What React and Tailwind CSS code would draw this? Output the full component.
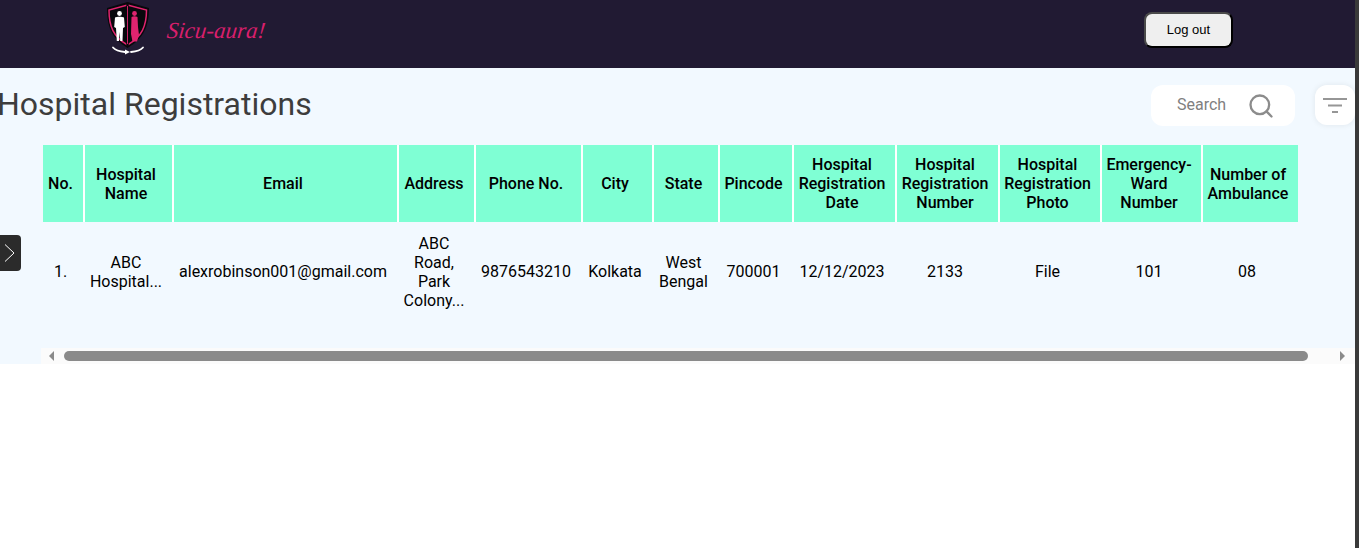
import React from 'react';
import { Search } from 'lucide-react';

const columns = [
  { label: 'No.', width: 'w-[42px]', value: '1.' },
  { label: 'Hospital Name', width: 'w-[89px]', value: 'ABC Hospital...' },
  { label: 'Email', width: 'w-[225px]', value: 'alexrobinson001@gmail.com' },
  { label: 'Address', width: 'w-[77px]', value: 'ABC Road, Park Colony...' },
  { label: 'Phone No.', width: 'w-[107px]', value: '9876543210' },
  { label: 'City', width: 'w-[71px]', value: 'Kolkata' },
  { label: 'State', width: 'w-[66px]', value: 'West Bengal' },
  { label: 'Pincode', width: 'w-[74px]', value: '700001' },
  { label: 'Hospital Registration Date', width: 'w-[103px]', value: '12/12/2023' },
  { label: 'Hospital Registration Number', width: 'w-[103px]', value: '2133' },
  { label: 'Hospital Registration Photo', width: 'w-[102px]', value: 'File' },
  { label: 'Emergency-Ward Number', width: 'w-[101px]', value: '101' },
  { label: 'Number of Ambulance', width: 'w-[95px]', value: '08' },
];

function Logo() {
  return (
    <div className="flex items-center gap-[17px] mb-[12px]">
      <svg width="44" height="56" viewBox="0 0 44 56" className="shrink-0">
        <path d="M21.5 2 L43 8 C43 26 38 38 21.5 48 C5 38 1 26 1 8 Z" fill="#08080c" />
        <path d="M21.5 5 L40.5 10 C40.5 26 36 36.5 21.5 45 C7 36.5 3 26 3 10 Z" fill="#08080c" stroke="#e0246f" strokeWidth="1.5" />
        <path d="M21.5 4 V46" stroke="#08080c" strokeWidth="2.4" />
        <path d="M21.5 6 V44" stroke="#e0246f" strokeWidth="0.9" />
        <circle cx="13.5" cy="13.5" r="2.4" fill="#fff" />
        <path d="M9 17.5 C10.5 16.5 16.5 16.5 18 17.5 L18.8 27 L17 28 L16.5 41 H14.3 L13.6 32 L13 41 H10.8 L10 28 L8.2 27 Z" fill="#fff" />
        <circle cx="28.5" cy="13.5" r="2.4" fill="#e0246f" />
        <path d="M25.5 17 C27 16 30 16 31.5 17 L32 27 L33 35 L31 41.5 H26.5 L25 34 Z" fill="#e0246f" />
        <path d="M7 47.5 C10 51 14 51.5 19 52 M25 52 C30 51.5 34 51 37 47.5" stroke="#fff" strokeWidth="1.8" fill="none" strokeLinecap="round" />
        <path d="M19 49.5 L24 52 L19 54.5 Z" fill="#fff" />
      </svg>
      <span className="mt-[4px] font-['Liberation_Serif',serif] italic text-[23px] leading-none text-[#d81f6c] -skew-x-6">Sicu-aura!</span>
    </div>
  );
}

function FilterIcon() {
  return (
    <svg width="24" height="15" viewBox="0 0 24 15" className="text-[#969696]" stroke="currentColor" strokeWidth="2">
      <path d="M0 1 H24 M5 7.5 H19 M9 14 H15" />
    </svg>
  );
}

export default function App() {
  return (
    <div className="flex min-h-[548px] bg-white font-['Roboto',sans-serif] overflow-hidden">
      <div className="flex-1 min-w-0">
        <header className="h-[68px] bg-[#211a33] flex items-center justify-between pl-[106px] pr-[122px]">
          <Logo />
          <button className="w-[89px] h-[36px] mb-[8px] rounded-lg bg-[#efefef] text-[13px] text-black border-2 border-t-[#4a4a4a] border-l-[#4a4a4a] border-r-black border-b-black font-['Liberation_Sans',sans-serif]">
            Log out
          </button>
        </header>

        <main className="relative h-[296px] bg-[#f2f9ff]">
          <div className="flex items-start justify-between h-[77px]">
            <h1 className="text-[32px] leading-none text-[#3d3d3d] -ml-[3px] mt-[20px]">Hospital Registrations</h1>
            <div className="flex items-start gap-5 mt-[17px]">
              <div className="w-[144px] h-[41px] bg-white rounded-xl flex items-center pl-[26px] gap-[21px]">
                <span className="text-[16px] text-[#808080] mb-[2px]">Search</span>
                <Search size={28} strokeWidth={2} className="text-[#8c8c8c] shrink-0" />
              </div>
              <div className="w-[40px] h-[40px] bg-white rounded-xl shadow-[0_0_6px_rgba(0,0,0,0.08)] flex items-center justify-center">
                <FilterIcon />
              </div>
            </div>
          </div>

          <div className="pl-[43px]">
            <table className="table-fixed border-separate border-spacing-0 w-[1255px] text-center text-[16px] leading-[19px] text-black">
              <thead>
                <tr>
                  {columns.map((c) => (
                    <th key={c.label} className={`${c.width} h-[77px] pl-[2px] pr-[7px] font-medium bg-[#7fffd4] border-r-2 border-white last:border-r-0`}>
                      {c.label}
                    </th>
                  ))}
                </tr>
              </thead>
              <tbody>
                <tr>
                  {columns.map((c) => (
                    <td key={c.label} className="h-[99px] pl-[2px] pr-[9px] font-normal">{c.value}</td>
                  ))}
                </tr>
              </tbody>
            </table>
          </div>

          <div className="absolute left-0 top-[167px] w-[21px] h-[36px] bg-[#2b2b2b] rounded-r flex items-center pl-[4px]">
            <svg width="11" height="18" viewBox="0 0 11 18" fill="none" stroke="#fff" strokeWidth="1">
              <path d="M1 0.5 L10 9 L1 17.5" />
            </svg>
          </div>

          <div className="absolute left-[41px] right-0 bottom-0 h-[16px] bg-[#fbfbfb] flex items-center">
            <div className="w-0 h-0 ml-[8px] border-y-[5px] border-y-transparent border-r-[5px] border-r-[#8a8a8a]" />
            <div className="ml-[10px] w-[1244px] h-[10px] rounded-full bg-[#8a8a8a]" />
            <div className="w-0 h-0 ml-[32px] border-y-[5px] border-y-transparent border-l-[5px] border-l-[#8a8a8a]" />
          </div>
        </main>
      </div>
      <div className="w-[4px] bg-[#3a3a3a]" />
    </div>
  );
}
